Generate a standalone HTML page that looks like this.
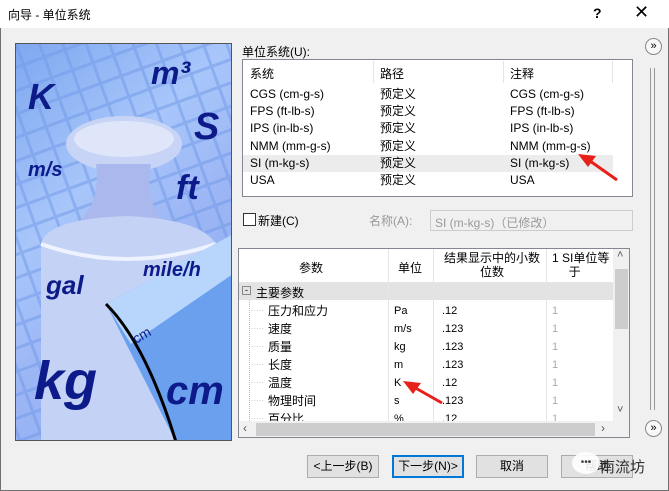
<!DOCTYPE html>
<html><head><meta charset="utf-8"><style>
*{margin:0;padding:0;box-sizing:border-box}
body{width:669px;height:491px;overflow:hidden;background:#f0f0f0;font-family:"Liberation Sans","Noto Sans CJK SC",sans-serif;font-size:12px;color:#000;position:relative}
.a{position:absolute;white-space:nowrap}
.win{position:absolute;left:0;top:0;width:669px;height:491px;border:1px solid #707070;border-top:none}
.btn{position:absolute;top:455px;width:72px;height:23px;background:#e1e1e1;border:1px solid #adadad;text-align:center;line-height:21px;font-size:12px}
.g{color:#999}
</style></head><body>
<div class="win"></div>
<div class="a" style="left:0;top:0;width:669px;height:28px;background:#fff;"></div>
<div class="a" style="left:8px;top:6px;font-size:12px">向导 - 单位系统</div>
<div class="a" style="left:593px;top:5px;font-size:14px;font-weight:bold">?</div>
<div class="a" style="left:634px;top:2px;font-size:18px">✕</div>

<div class="a" style="left:15px;top:43px;width:217px;height:398px;border:1px solid #555;overflow:hidden;background:linear-gradient(135deg,#7fa8f0 0%,#a8c6fa 35%,#9bb4f4 60%,#8ab0f2 100%)">
<svg width="217" height="398" style="position:absolute;left:0;top:0">
<defs><pattern id="p" width="22" height="22" patternUnits="userSpaceOnUse" patternTransform="rotate(-20)"><rect width="22" height="22" fill="none" stroke="#6f98e8" stroke-width="3" opacity=".5"/></pattern></defs>
<rect width="217" height="398" fill="url(#p)"/>
<ellipse cx="108" cy="100" rx="58" ry="28" fill="#c8d4f6"/>
<ellipse cx="108" cy="95" rx="50" ry="18" fill="#dfe6fa"/>
<path d="M80 120 Q85 160 60 180 L150 180 Q128 160 135 120 Z" fill="#aab8ee"/>
<path d="M25 200 Q30 175 110 172 Q185 175 200 200 L200 398 L25 398 Z" fill="#c4d2f5"/>
<path d="M25 200 Q110 230 200 200" fill="none" stroke="#eef3ff" stroke-width="4"/>
<path d="M90 260 L217 190 L217 398 L160 398 Z" fill="#6aa0ee"/>
<path d="M90 260 L217 190 L217 230 L115 300 Z" fill="#b8d6fb"/>
<path d="M90 260 Q130 300 160 398" fill="none" stroke="#000" stroke-width="3"/>
<text x="12" y="65" font-family="Liberation Sans" font-weight="bold" font-style="italic" font-size="36" fill="#0d1a8a">K</text>
<text x="135" y="40" font-family="Liberation Sans" font-weight="bold" font-style="italic" font-size="32" fill="#0d1a8a">m³</text>
<text x="178" y="95" font-family="Liberation Sans" font-weight="bold" font-style="italic" font-size="38" fill="#0d1a8a">S</text>
<text x="12" y="132" font-family="Liberation Sans" font-weight="bold" font-style="italic" font-size="20" fill="#0d1a8a">m/s</text>
<text x="160" y="155" font-family="Liberation Sans" font-weight="bold" font-style="italic" font-size="34" fill="#0d1a8a">ft</text>
<text x="30" y="250" font-family="Liberation Sans" font-weight="bold" font-style="italic" font-size="26" fill="#0d1a8a">gal</text>
<text x="127" y="232" font-family="Liberation Sans" font-weight="bold" font-style="italic" font-size="20" fill="#0d1a8a">mile/h</text>
<text x="18" y="355" font-family="Liberation Sans" font-weight="bold" font-style="italic" font-size="54" fill="#0d1a8a">kg</text>
<text x="150" y="360" font-family="Liberation Sans" font-weight="bold" font-style="italic" font-size="40" fill="#0d1a8a">cm</text>
<text x="120" y="300" font-family="Liberation Sans" font-size="14" fill="#0d1a8a" transform="rotate(-30 120 300)">cm</text>
</svg></div>

<div class="a" style="left:242px;top:43px">单位系统(U):</div>
<div class="a" style="left:645px;top:38px;width:17px;height:17px;border:1px solid #888;border-radius:50%;background:#f8f8f8;font-size:11px;text-align:center;line-height:14px">»</div>
<div class="a" style="left:650px;top:68px;width:5px;height:342px;border-left:1px solid #999;border-right:1px solid #999"></div>
<div class="a" style="left:645px;top:420px;width:17px;height:17px;border:1px solid #888;border-radius:50%;background:#f8f8f8;font-size:11px;text-align:center;line-height:14px">»</div>

<div class="a" style="left:242px;top:59px;width:391px;height:138px;background:#fff;border:1px solid #828790"></div>
<div class="a" style="left:373px;top:61px;width:1px;height:22px;background:#e5e5e5"></div>
<div class="a" style="left:503px;top:61px;width:1px;height:22px;background:#e5e5e5"></div>
<div class="a" style="left:612px;top:61px;width:1px;height:22px;background:#e5e5e5"></div>
<div class="a" style="left:243px;top:155px;width:370px;height:17px;background:#ececec"></div>
<div class="a" style="left:250px;top:65px">系统</div>
<div class="a" style="left:380px;top:65px">路径</div>
<div class="a" style="left:510px;top:65px">注释</div>
<div class="a" style="left:250px;top:86px;line-height:17.2px">CGS (cm-g-s)<br>FPS (ft-lb-s)<br>IPS (in-lb-s)<br>NMM (mm-g-s)<br>SI (m-kg-s)<br>USA</div>
<div class="a" style="left:380px;top:86px;line-height:17.2px">预定义<br>预定义<br>预定义<br>预定义<br>预定义<br>预定义</div>
<div class="a" style="left:510px;top:86px;line-height:17.2px">CGS (cm-g-s)<br>FPS (ft-lb-s)<br>IPS (in-lb-s)<br>NMM (mm-g-s)<br>SI (m-kg-s)<br>USA</div>

<div class="a" style="left:243px;top:213px;width:13px;height:13px;border:1px solid #333;background:#fff"></div>
<div class="a" style="left:258px;top:212px">新建(C)</div>
<div class="a g" style="left:369px;top:212px">名称(A):</div>
<div class="a g" style="left:430px;top:210px;width:203px;height:21px;border:1px solid #ccc;background:#f0f0f0;padding:3px 4px">SI (m-kg-s)（已修改）</div>

<div class="a" style="left:238px;top:248px;width:392px;height:190px;background:#fff;border:1px solid #828790;overflow:hidden">
 <div class="a" style="left:0;top:34px;width:374px;height:17px;background:#e3e3e3"></div>
 <div class="a" style="left:149px;top:0;width:1px;height:172px;background:#e5e5e5"></div>
 <div class="a" style="left:194px;top:0;width:1px;height:172px;background:#e5e5e5"></div>
 <div class="a" style="left:307px;top:0;width:1px;height:172px;background:#e5e5e5"></div>
 <div class="a" style="left:0;top:33px;width:374px;height:1px;background:#e5e5e5"></div>
 <div class="a" style="left:60px;top:10px">参数</div>
 <div class="a" style="left:159px;top:10px">单位</div>
 <div class="a" style="left:203px;top:2px;text-align:center;line-height:14px;width:100px">结果显示中的小数<br>位数</div>
 <div class="a" style="left:313px;top:2px;line-height:14px">1 SI单位等<br>&nbsp;&nbsp;&nbsp;&nbsp;&nbsp;于</div>
 <div class="a" style="left:3px;top:37px;width:9px;height:9px;border:1px solid #888;font-size:9px;line-height:6px;text-align:center">-</div>
 <div class="a" style="left:17px;top:35px">主要参数</div>
 <div class="a" style="left:29px;top:53px;line-height:18px">压力和应力<br>速度<br>质量<br>长度<br>温度<br>物理时间<br>百分比</div>
 <div class="a" style="left:9px;top:53px;line-height:18px;color:#bbb;font-size:8px">······<br>······<br>······<br>······<br>······<br>······<br>······</div>
 <div class="a" style="left:10px;top:51px;width:1px;height:125px;border-left:1px dotted #bbb"></div>
 <div class="a" style="left:155px;top:53px;line-height:18px;font-size:11px">Pa<br>m/s<br>kg<br>m<br>K<br>s<br>%</div>
 <div class="a" style="left:203px;top:53px;line-height:18px;font-size:11px">.12<br>.123<br>.123<br>.123<br>.12<br>.123<br>.12</div>
 <div class="a" style="left:313px;top:53px;line-height:18px;font-size:11px;color:#aaa">1<br>1<br>1<br>1<br>1<br>1<br>1</div>
 <div class="a" style="left:374px;top:0;width:17px;height:172px;background:#f0f0f0"></div>
 <div class="a" style="left:376px;top:20px;width:13px;height:60px;background:#cdcdcd"></div>
 <div class="a" style="left:378px;top:0px;font-size:11px;color:#555">˄</div>
 <div class="a" style="left:378px;top:155px;font-size:11px;color:#555">˅</div>
 <div class="a" style="left:0;top:172px;width:391px;height:17px;background:#f0f0f0"></div>
 <div class="a" style="left:17px;top:174px;width:339px;height:13px;background:#cdcdcd"></div>
 <div class="a" style="left:4px;top:172px;color:#555">‹</div>
 <div class="a" style="left:362px;top:172px;color:#555">›</div>
</div>

<svg class="a" style="left:0;top:0" width="669" height="491">
<path d="M617 180 L590 161" stroke="#e8201a" stroke-width="3"/>
<path d="M578 154 L596 156 L588 167 Z" fill="#e8201a"/>
<path d="M442 403 L412 386" stroke="#e8201a" stroke-width="3"/>
<path d="M403 381 L421 383 L413 394 Z" fill="#e8201a"/>
</svg>

<div class="btn" style="left:307px">&lt;上一步(B)</div>
<div class="btn" style="left:392px;border:2px solid #0078d7;line-height:19px">下一步(N)&gt;</div>
<div class="btn" style="left:476px">取消</div>
<div class="btn" style="left:561px">帮助</div>
<div class="a" style="left:572px;top:452px;width:28px;height:22px;background:#fff;border-radius:50%;opacity:.9;font-size:10px;text-align:center;line-height:22px;color:#333">•••</div>
<div class="a" style="left:600px;top:456px;font-size:15px;color:#333">南流坊</div>
</body></html>
